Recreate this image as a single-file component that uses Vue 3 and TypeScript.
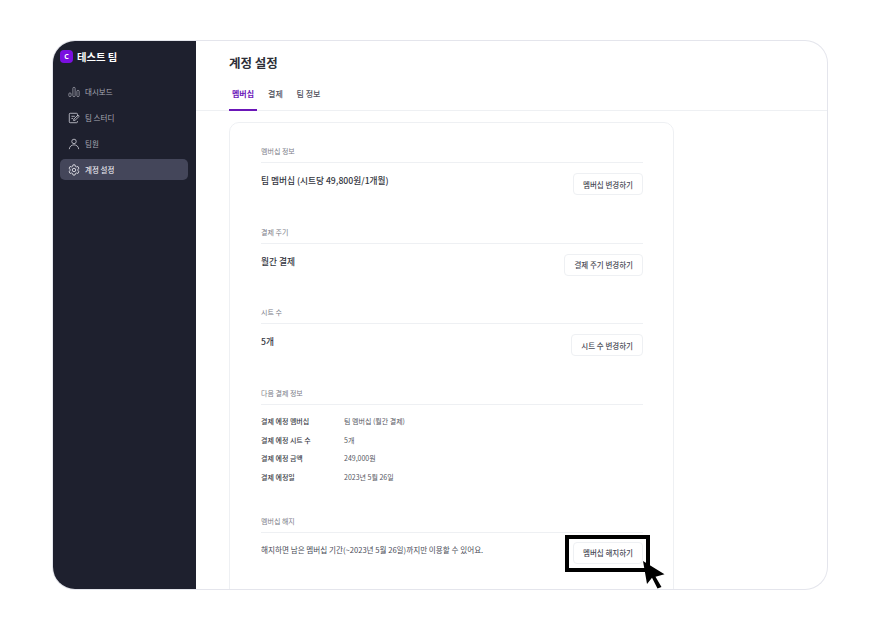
<script setup lang="ts">
const nav = [
  { label: '대시보드', icon: 'chart' },
  { label: '팀 스터디', icon: 'note' },
  { label: '팀원', icon: 'user' },
  { label: '계정 설정', icon: 'gear', active: true },
]
const details = [
  ['결제 예정 멤버십', '팀 멤버십 (월간 결제)'],
  ['결제 예정 시트 수', '5개'],
  ['결제 예정 금액', '249,000원'],
  ['결제 예정일', '2023년 5월 26일'],
]
const sections = [
  { label: '멤버십 정보', value: '팀 멤버십 (시트당 49,800원/1개월)', action: '멤버십 변경하기' },
  { label: '결제 주기', value: '월간 결제', action: '결제 주기 변경하기' },
  { label: '시트 수', value: '5개', action: '시트 수 변경하기' },
]
</script>

<template>
  <div class="page">
    <div class="window">
      <aside class="sidebar">
        <div class="team">
          <span class="logo">C</span>
          <span>테스트 팀</span>
        </div>
        <nav class="nav">
          <a v-for="item in nav" :key="item.label" class="nav-item" :class="{ active: item.active }">
            <svg class="nav-icon" viewBox="0 0 14 14" fill="none" stroke="currentColor" stroke-width="1">
              <template v-if="item.icon === 'chart'">
                <g stroke-width="0.7">
                  <rect x="1" y="8" width="2.600" height="4.500" rx="1.300" />
                  <rect x="5.700" y="1.500" width="2.600" height="11" rx="1.300" />
                  <rect x="10.400" y="5" width="2.600" height="7.500" rx="1.300" />
                </g>
              </template>
              <template v-else-if="item.icon === 'note'">
                <path d="M11 5V2.500a1 1 0 0 0-1-1H2.500a1 1 0 0 0-1 1v9a1 1 0 0 0 1 1H10a1 1 0 0 0 1-1v-1" />
                <path d="M4 5h4M4 7.500h2M6.500 10l.4-1.800L11.700 3.600l1.400 1.400-4.800 4.600z" />
              </template>
              <template v-else-if="item.icon === 'user'">
                <circle cx="7" cy="4" r="2.600" />
                <path d="M1.500 13c.4-3.200 2.500-5 5.500-5s5.100 1.800 5.500 5" />
              </template>
              <template v-else>
                <circle cx="7" cy="7" r="2" />
                <path d="M5.800 1h2.400l.4 1.700 1.300.7 1.700-.5 1.200 2.100-1.300 1.200v1.500l1.300 1.200-1.200 2.100-1.700-.5-1.300.7-.4 1.700H5.800l-.4-1.700-1.300-.7-1.700.5-1.200-2.100 1.300-1.200V6.200L1.200 5l1.200-2.100 1.700.5 1.300-.7z" stroke-linejoin="round" />
              </template>
            </svg>
            <span>{{ item.label }}</span>
          </a>
        </nav>
      </aside>

      <main class="main">
        <header class="header">
          <h1 class="title">계정 설정</h1>
          <div class="tabs">
            <a class="tab current">멤버십</a>
            <a class="tab">결제</a>
            <a class="tab">팀 정보</a>
          </div>
        </header>
        <div class="content">
          <section class="card">
            <div v-for="s in sections" :key="s.label" class="block">
              <div class="label">{{ s.label }}</div>
              <div class="row">
                <div class="value">{{ s.value }}</div>
                <button class="btn">{{ s.action }}</button>
              </div>
            </div>

            <div class="block details-block">
              <div class="label">다음 결제 정보</div>
              <dl class="details">
                <template v-for="d in details" :key="d[0]">
                  <dt>{{ d[0] }}</dt>
                  <dd>{{ d[1] }}</dd>
                </template>
              </dl>
            </div>

            <div class="block last">
              <div class="label">멤버십 해지</div>
              <div class="row cancel-row">
                <div class="note">해지하면 남은 멤버십 기간(~2023년 5월 26일)까지만 이용할 수 있어요.</div>
                <div class="highlight-wrap">
                  <button class="btn">멤버십 해지하기</button>
                  <span class="highlight"></span>
                  <svg class="cursor" viewBox="0 0 22 28" width="22" height="28">
                    <path d="M0 0 L21.500 13.300 L12.500 15.700 L18.500 26 L14.500 27.500 L9 16.700 L4 23 Z" fill="#000" />
                  </svg>
                </div>
              </div>
            </div>
          </section>
        </div>
      </main>
    </div>
  </div>
</template>

<style>
html, body { margin: 0; background: #fff; }
</style>

<style scoped>
.page {
  width: 881px;
  height: 630px;
  padding: 41px 54px 41px 53px;
  box-sizing: border-box;
  font-family: "Noto Sans CJK KR", "Noto Sans", sans-serif;
  color: #2b2d36;
}
.window {
  display: flex;
  height: 548px;
  box-sizing: border-box;
  background: #fff;
  border-radius: 22px;
  box-shadow: 0 0 0 1px #e4e5ec;
  overflow: hidden;
}
.sidebar {
  flex: 0 0 143px;
  background: #1e202e;
  color: #c9cad2;
  box-sizing: border-box;
  padding: 8px 8px 0 7px;
}
.team {
  display: flex;
  align-items: center;
  gap: 4px;
  height: 15px;
  color: #fff;
  font-size: 10.300px;
  font-weight: 700;
}
.logo {
  width: 13px;
  height: 13px;
  border-radius: 4px;
  background: #7a0fe0;
  color: #fff;
  font-size: 7px;
  font-family: "Noto Sans", sans-serif;
  font-weight: 700;
  display: flex;
  align-items: center;
  justify-content: center;
}
.nav {
  margin-top: 17px;
  display: flex;
  flex-direction: column;
  gap: 5px;
}
.nav-item {
  display: flex;
  align-items: center;
  gap: 5px;
  height: 21px;
  padding-left: 8px;
  border-radius: 5px;
  font-size: 7.500px;
  color: #a9aab5;
}
.nav-item.active {
  background: #44465a;
  color: #e4e4ea;
  font-weight: 500;
}
.nav-icon {
  width: 12px;
  height: 12px;
  flex: none;
  color: #c4c5ce;
}
.active .nav-icon {
  color: #e4e4ea;
}
.main {
  flex: 1;
  display: flex;
  flex-direction: column;
  min-width: 0;
}
.header {
  box-sizing: border-box;
  height: 70px;
  padding: 13px 0 0 33px;
  border-bottom: 1px solid #eef0f3;
}
.title {
  margin: 0;
  font-size: 12.500px;
  line-height: 18px;
  font-weight: 700;
  color: #2d2f38;
}
.tabs {
  display: flex;
  gap: 13.700px;
  margin-top: 13px;
}
.tab {
  font-size: 8px;
  line-height: 18px;
  height: 26px;
  color: #4f515c;
  font-weight: 500;
  box-sizing: border-box;
}
.tab.current {
  color: #6b16b8;
  font-weight: 700;
  padding: 0 3px;
  margin-right: -2.700px;
  border-bottom: 2px solid #6b16b8;
}
.content {
  flex: 1;
  padding: 11px 0 0 33px;
  overflow: hidden;
}
.card {
  width: 445px;
  height: 480px;
  box-sizing: border-box;
  padding: 20px 30px 0 31px;
  border: 1px solid #eef0f3;
  border-radius: 10px;
}
.block {
  height: 80.670px;
}
.details-block {
  height: 128px;
}
.label {
  box-sizing: border-box;
  height: 20px;
  font-size: 7px;
  line-height: 16px;
  color: #7b7d88;
  border-bottom: 1px solid #eef0f3;
}
.row {
  display: flex;
  justify-content: space-between;
  align-items: flex-start;
  padding-top: 10px;
}
.cancel-row {
  padding-top: 9px;
}
.value {
  font-size: 8.700px;
  line-height: 16px;
  color: #33353e;
  font-weight: 500;
}
.btn {
  display: block;
  font-family: inherit;
  height: 22px;
  padding: 0 9px;
  background: #fff;
  border: 1px solid #eef0f3;
  border-radius: 4px;
  font-size: 7.500px;
  color: #4a4c57;
  font-weight: 500;
}
.details {
  margin: 7px 0 0;
  display: grid;
  grid-template-columns: 83px 1fr;
  grid-auto-rows: 18.500px;
  align-items: center;
  font-size: 7px;
}
.details dt {
  font-weight: 500;
  color: #3a3c46;
}
.details dd {
  margin: 0;
  color: #55575f;
}
.note {
  padding-top: 1px;
  font-size: 7.600px;
  line-height: 14px;
  color: #4a4c57;
}
.highlight-wrap {
  position: relative;
}
.highlight {
  position: absolute;
  left: -8px;
  top: -7px;
  right: -7px;
  bottom: -8px;
  border: 4px solid #000;
  pointer-events: none;
}
.cursor {
  position: absolute;
  top: 19px;
  left: 100%;
}
</style>
